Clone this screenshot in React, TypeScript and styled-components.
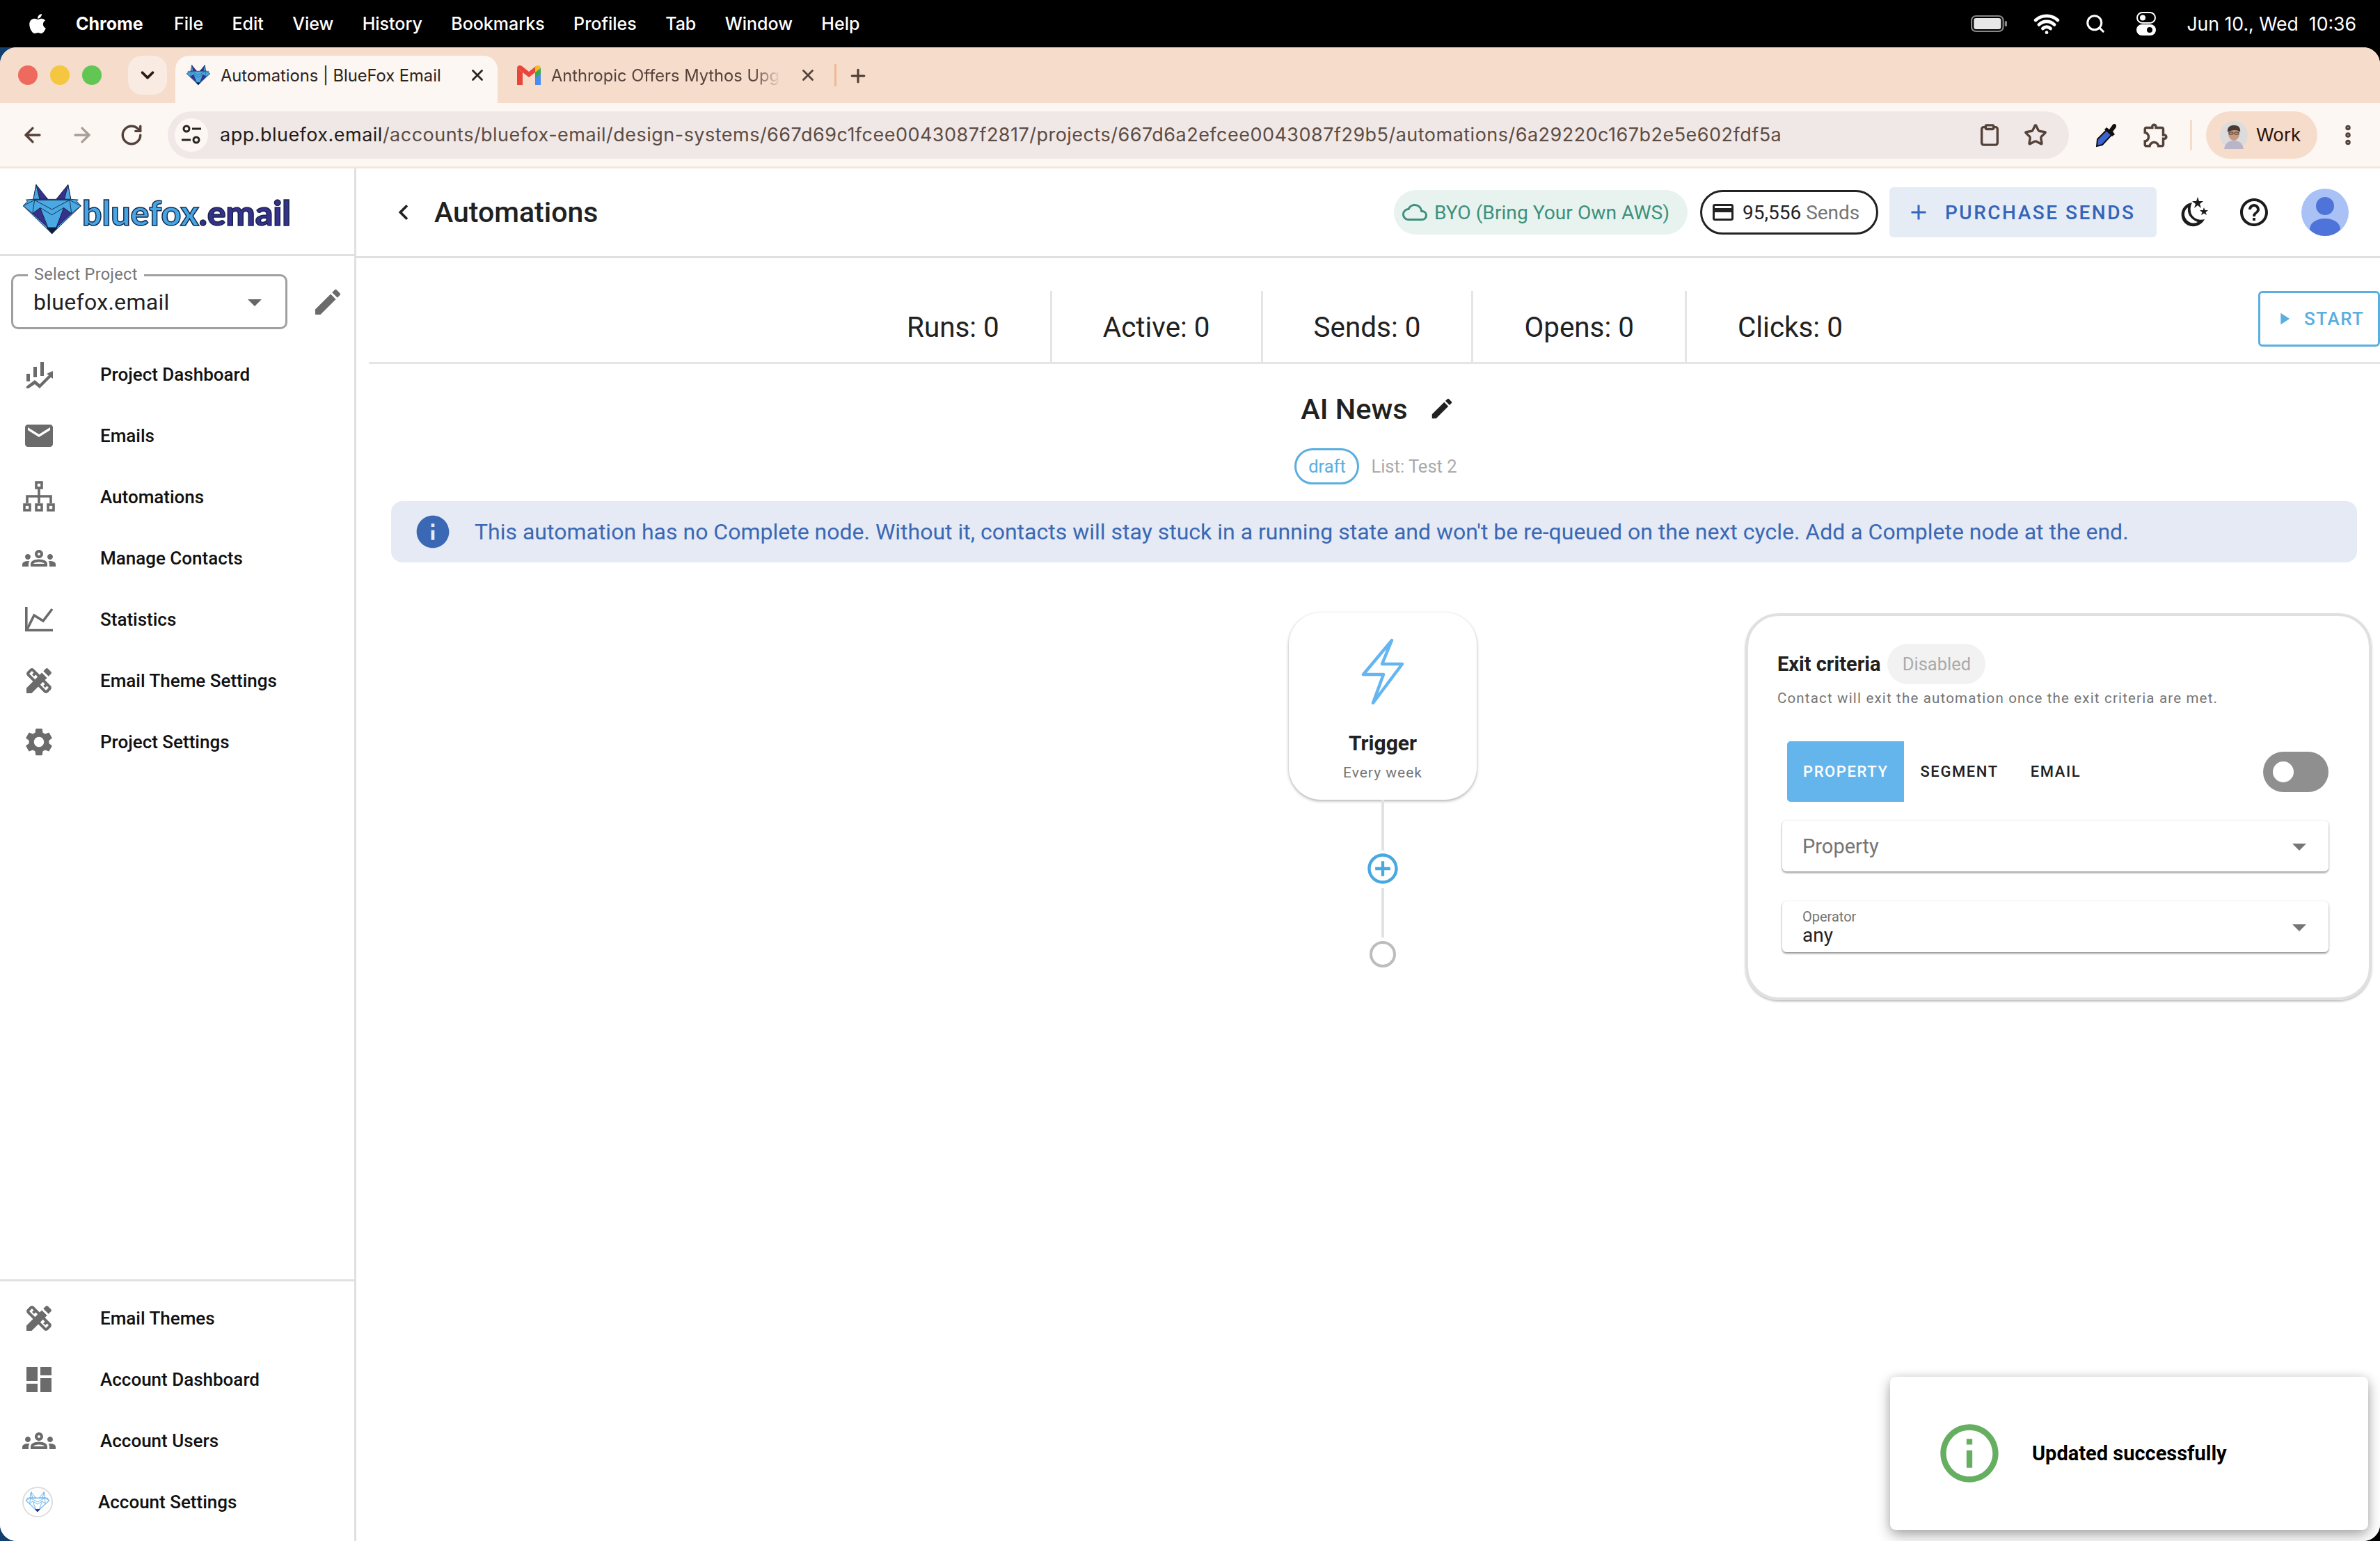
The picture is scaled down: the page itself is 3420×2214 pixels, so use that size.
import React, {FunctionComponent} from 'react';
import styled, {createGlobalStyle} from 'styled-components';
import {FaApple} from 'react-icons/fa';
import {
    MdAdd, MdAddCircleOutline, MdArrowDropDown, MdChevronLeft, MdCreditCard, MdDashboard, MdDesignServices,
    MdEdit, MdEmail, MdHelpOutline, MdInfo, MdInfoOutline, MdOutlineCloud, MdOutlineExtension, MdOutlineGroups,
    MdPlayArrow, MdSettings,
} from 'react-icons/md';
import {ArrowLeft, ArrowRight, ChevronDown, Clipboard, MoreVertical, Plus, RotateCw, Search, Star, Wifi, X} from 'lucide-react';

const GlobalStyle = createGlobalStyle`
    html, body {
        margin: 0;
        padding: 0;
        background: #000;
    }
    * {
        box-sizing: border-box;
    }
`;

const Screen = styled.div`
    position: relative;
    width: 3420px;
    height: 2214px;
    overflow: hidden;
    display: flex;
    flex-direction: column;
    font-family: Roboto, "Liberation Sans", sans-serif;
    background: linear-gradient(90deg, #12406e 0%, #000 40%);
`;

const MenuBar = styled.div`
    height: 68px;
    flex: none;
    background: #000;
    color: #fff;
    display: flex;
    align-items: center;
    font-family: Inter, "Liberation Sans", sans-serif;
    font-size: 25px;
    padding-left: 38px;
    padding-right: 34px;
`;

const MenuItems = styled.div`
    display: flex;
    align-items: center;
    gap: 41.4px;
    margin-left: 39px;
`;

const MenuItem = styled.span<{$strong?: boolean}>`
    font-weight: ${props => props.$strong ? 700 : 500};
    margin-right: ${props => props.$strong ? 3 : 0}px;
`;

const StatusItems = styled.div`
    margin-left: auto;
    display: flex;
    align-items: center;
`;

const StatusIcon = styled.span<{$gap: number}>`
    display: flex;
    margin-right: ${props => props.$gap}px;
`;

const Clock = styled.span`
    font-size: 26.6px;
    font-weight: 400;
    white-space: pre;
`;

const BrowserWindow = styled.div`
    flex: 1;
    min-height: 0;
    display: flex;
    flex-direction: column;
    border-radius: 24px;
    overflow: hidden;
    background: #fff;
`;

const TabStrip = styled.div`
    height: 80px;
    flex: none;
    background: #f6dccb;
    display: flex;
    align-items: flex-end;
    padding-left: 26px;
`;

const Traffic = styled.div`
    display: flex;
    gap: 18px;
    align-self: center;
`;

const Light = styled.span<{$color: string}>`
    width: 28px;
    height: 28px;
    border-radius: 50%;
    background: ${props => props.$color};
`;

const TabMenu = styled.div`
    width: 56px;
    height: 56px;
    margin-left: 38px;
    margin-bottom: 12px;
    border-radius: 20px;
    background: #faebe2;
    color: #2c1a10;
    display: flex;
    align-items: center;
    justify-content: center;
`;

const Tab = styled.div<{$active?: boolean}>`
    position: relative;
    height: 68px;
    width: 463px;
    margin-left: 12px;
    padding: 0 16px 12px 16px;
    display: flex;
    align-items: center;
    color: ${props => props.$active ? '#2a2320' : '#54423a'};
    background: ${props => props.$active ? '#fdf7f3' : 'transparent'};
    border-radius: 20px 20px 0 0;
    font-family: Inter, "Liberation Sans", sans-serif;
    font-size: 23.7px;
`;

const TabLabel = styled.span<{$fade?: boolean}>`
    margin-left: 15px;
    width: 330px;
    white-space: nowrap;
    overflow: hidden;
    ${props => props.$fade ? 'mask-image: linear-gradient(90deg, #000 88%, transparent 100%);' : ''}
`;

const TabClose = styled.span`
    margin-left: auto;
    display: flex;
`;

const TabDivider = styled.span`
    width: 3px;
    height: 32px;
    background: #f0b896;
    margin: 0 0 24px 9px;
`;

const NewTab = styled.span`
    color: #54423a;
    display: flex;
    margin: 0 0 24px 16px;
`;

const Toolbar = styled.div`
    height: 94px;
    flex: none;
    background: #fdf7f3;
    border-bottom: 3px solid #f5e6dd;
    display: flex;
    align-items: center;
    padding: 0;
    color: #54423a;
`;

const NavButton = styled.span<{$dim?: boolean; $left: number}>`
    display: flex;
    margin-left: ${props => props.$left}px;
    color: ${props => props.$dim ? '#a99d97' : '#54423a'};
`;

const Omnibox = styled.div`
    width: 2732px;
    height: 68px;
    margin-left: 35px;
    border-radius: 34px;
    background: #f0e8e6;
    display: flex;
    align-items: center;
    padding: 0 31px 0 10px;
`;

const SiteInfo = styled.span`
    width: 48px;
    height: 48px;
    border-radius: 50%;
    background: #fdf7f3;
    display: flex;
    align-items: center;
    justify-content: center;
    flex: none;
`;

const Url = styled.span`
    font-family: Inter, "Liberation Sans", sans-serif;
    font-size: 27px;
    letter-spacing: 0.48px;
    margin-left: 17px;
    color: #5c4c44;
    white-space: nowrap;
    b {
        font-weight: 400;
        color: #241c18;
    }
`;

const UrlActions = styled.div`
    margin-left: auto;
    display: flex;
    gap: 32px;
    align-items: center;
`;

const ToolIcon = styled.span<{$left: number}>`
    display: flex;
    margin-left: ${props => props.$left}px;
`;

const ToolDivider = styled.span`
    width: 3px;
    height: 44px;
    background: #f6dccb;
    margin-left: 28px;
`;

const ProfileChip = styled.div`
    width: 160px;
    height: 68px;
    margin-left: 20px;
    border-radius: 34px;
    background: #f6dccb;
    color: #2c1208;
    display: flex;
    align-items: center;
    gap: 12px;
    padding-left: 20px;
    font-family: Inter, "Liberation Sans", sans-serif;
    font-size: 26px;
`;

const Body = styled.div`
    flex: 1;
    min-height: 0;
    display: flex;
    background: #fff;
`;

const Sidebar = styled.aside`
    width: 512px;
    flex: none;
    border-right: 3px solid #e0e0e0;
    display: flex;
    flex-direction: column;
`;

const LogoRow = styled.div`
    height: 126px;
    flex: none;
    border-bottom: 3px solid #e0e0e0;
    display: flex;
    align-items: center;
    padding-left: 33px;
    padding-bottom: 6px;
`;

const Wordmark = styled.span`
    font-family: Lato, "Open Sans", sans-serif;
    font-weight: 900;
    font-size: 50px;
    margin-left: 1px;
    margin-top: 8px;
    color: #46a6e2;
    -webkit-text-stroke: 1.5px #16244a;
    b {
        font-weight: 900;
        color: #37308c;
    }
`;

const ProjectRow = styled.div`
    display: flex;
    align-items: center;
    padding: 26px 0 0 16px;
`;

const SelectBox = styled.div`
    position: relative;
    width: 397px;
    height: 79px;
    border: 3px solid #a0a0a0;
    border-radius: 10px;
    display: flex;
    align-items: center;
    padding: 0 0 0 29px;
    font-size: 32px;
    letter-spacing: 0.3px;
    color: #222;
`;

const SelectLabel = styled.span`
    position: absolute;
    left: 21px;
    top: -17px;
    padding: 0 9px;
    background: #fff;
    font-size: 23.5px;
    line-height: 28px;
    color: #757575;
`;

const SelectArrow = styled.span`
    margin-left: auto;
    margin-right: 20px;
    display: flex;
    color: #666;
`;

const EditProject = styled.span`
    margin-left: 34px;
    display: flex;
    color: #6b6b6b;
`;

const NavList = styled.nav<{$bottom?: boolean}>`
    display: flex;
    flex-direction: column;
    ${props => props.$bottom ? `
        margin-top: auto;
        border-top: 3px solid #e0e0e0;
        padding-top: 9px;
        padding-bottom: 12px;
    ` : `
        padding-top: 21px;
    `}
`;

const NavItem = styled.div<{$tight?: boolean}>`
    height: 88px;
    display: flex;
    align-items: center;
    padding-left: 32px;
    color: #6b6b6b;
    span {
        margin-left: ${props => props.$tight ? 65 : 64}px;
        font-size: 26px;
        font-weight: 500;
        color: #111;
    }
`;

const AccountAvatar = styled.i`
    width: 44px;
    height: 44px;
    border-radius: 50%;
    border: 2px solid #ddd;
    display: flex;
    align-items: center;
    justify-content: center;
`;

const Main = styled.main`
    flex: 1;
    min-width: 0;
    display: flex;
    flex-direction: column;
`;

const Header = styled.header`
    height: 129px;
    flex: none;
    border-bottom: 3px solid #e0e0e0;
    display: flex;
    align-items: center;
    padding-left: 46px;
    color: #212121;
`;

const PageTitle = styled.h1`
    margin: 0 0 0 22px;
    font-size: 41px;
    font-weight: 500;
    color: #212121;
`;

const HeaderActions = styled.div`
    margin-left: auto;
    display: flex;
    align-items: center;
`;

const PlanChip = styled.div`
    width: 422px;
    height: 64px;
    border-radius: 32px;
    background: #e8f3f0;
    color: #3d917b;
    display: flex;
    align-items: center;
    gap: 10px;
    padding-left: 12px;
    font-size: 28.2px;
`;

const SendsChip = styled.div`
    width: 256px;
    height: 64px;
    margin-left: 18px;
    border: 3px solid #222;
    border-radius: 32px;
    display: flex;
    align-items: center;
    gap: 10px;
    padding-left: 12px;
    font-size: 28px;
    color: #222;
    em {
        font-style: normal;
        color: #757575;
    }
`;

const PurchaseButton = styled.div`
    width: 384px;
    height: 72px;
    margin-left: 16px;
    border-radius: 6px;
    background: #e5ecf6;
    color: #3365b8;
    display: flex;
    align-items: center;
    gap: 20px;
    padding-left: 24px;
    font-size: 28px;
    font-weight: 500;
    letter-spacing: 2.5px;
`;

const HeaderIcon = styled.span<{$left: number}>`
    display: flex;
    margin-left: ${props => props.$left}px;
    color: #1c1c1c;
`;

const UserAvatar = styled.span`
    display: flex;
    margin-left: 44px;
    margin-right: 45px;
`;

const StatsRow = styled.div`
    margin: 47px 0 0 18px;
    height: 105px;
    flex: none;
    border-bottom: 3px solid #e5e5e5;
    display: flex;
    padding-left: 700px;
`;

const Stat = styled.div<{$last?: boolean}>`
    padding: 2px 73px 0;
    height: 102px;
    display: flex;
    align-items: center;
    font-size: 40.4px;
    color: #212121;
    border-right: ${props => props.$last ? '0' : '3px solid #e5e5e5'};
`;

const StartButton = styled.div`
    margin-left: auto;
    width: 175px;
    height: 80px;
    border: 3px solid #5aaee0;
    border-radius: 6px;
    color: #5aaee0;
    display: flex;
    align-items: center;
    gap: 15px;
    padding-left: 20px;
    font-size: 26px;
    font-weight: 500;
    letter-spacing: 1.5px;
`;

const TitleRow = styled.div`
    margin-top: 41px;
    display: flex;
    justify-content: center;
    align-items: center;
    gap: 30px;
    padding-left: 28px;
    height: 46px;
    font-size: 41.5px;
    font-weight: 500;
    color: #212121;
`;

const MetaRow = styled.div`
    margin-top: 34px;
    display: flex;
    justify-content: center;
    align-items: center;
    gap: 17px;
    padding-left: 22px;
    font-size: 25.5px;
    color: #aaa;
`;

const DraftChip = styled.span`
    width: 93px;
    height: 52px;
    border: 3px solid #5aaee0;
    border-radius: 26px;
    color: #5aaee0;
    display: flex;
    align-items: center;
    justify-content: center;
`;

const Alert = styled.div`
    margin: 24px 33px 0 50px;
    height: 88px;
    flex: none;
    border-radius: 16px;
    background: #e5eaf5;
    color: #3a68b4;
    display: flex;
    align-items: center;
    gap: 32px;
    padding-left: 32px;
    font-size: 32px;
`;

const Canvas = styled.div`
    margin-top: 72px;
    display: flex;
    align-items: flex-start;
    padding-left: 1340px;
`;

const NodeColumn = styled.div`
    width: 270px;
    display: flex;
    flex-direction: column;
    align-items: center;
`;

const TriggerCard = styled.div`
    width: 270px;
    height: 269px;
    border-radius: 46px;
    background: #fff;
    box-shadow: 0 2px 4px rgba(0, 0, 0, 0.3), 0 0 3px rgba(0, 0, 0, 0.06);
    display: flex;
    flex-direction: column;
    align-items: center;
    padding-top: 37px;
    strong {
        margin-top: 37px;
        font-size: 30px;
        font-weight: 700;
        color: #212121;
    }
    small {
        margin-top: 13px;
        font-size: 21px;
        letter-spacing: 1px;
        color: #757575;
    }
`;

const Connector = styled.span<{$height: number; $gap?: number}>`
    width: 4px;
    height: ${props => props.$height}px;
    margin-top: ${props => props.$gap || 0}px;
    background: #e2e2e2;
`;

const AddButton = styled.span`
    display: flex;
    color: #4aa8e0;
`;

const EndDot = styled.span`
    width: 38px;
    height: 38px;
    border: 4px solid #bdbdbd;
    border-radius: 50%;
    margin-top: 5px;
`;

const ExitPanel = styled.section`
    margin: 1px 0 0 386px;
    width: 900px;
    height: 556px;
    border: 4px solid #e0e0e0;
    border-radius: 48px;
    box-shadow: 0 2px 3px rgba(0, 0, 0, 0.25);
    padding: 40px 58px 0 42px;
`;

const ExitHeading = styled.div`
    display: flex;
    align-items: center;
    gap: 10px;
    font-size: 29px;
    font-weight: 700;
    color: #212121;
`;

const DisabledChip = styled.span`
    width: 141px;
    height: 58px;
    border-radius: 29px;
    background: #f2f2f2;
    color: #aaa;
    font-size: 25.5px;
    font-weight: 400;
    display: flex;
    align-items: center;
    justify-content: center;
`;

const ExitHint = styled.p`
    margin: 8px 0 0;
    font-size: 20.5px;
    letter-spacing: 1.17px;
    color: #757575;
`;

const TabsRow = styled.div`
    margin: 50px 0 0 14px;
    display: flex;
    align-items: center;
`;

const CriteriaTab = styled.span<{$active?: boolean}>`
    height: 87px;
    padding: 0 23px;
    display: flex;
    align-items: center;
    font-size: 22px;
    font-weight: 500;
    letter-spacing: 1.6px;
    color: ${props => props.$active ? '#fff' : '#212121'};
    background: ${props => props.$active ? '#64b5ec' : 'transparent'};
    border-radius: ${props => props.$active ? '5px 0 0 5px' : '0'};
`;

const Toggle = styled.span`
    margin-left: auto;
    width: 94px;
    height: 58px;
    border-radius: 29px;
    background: #8f8f8f;
    display: flex;
    align-items: center;
    padding-left: 14px;
    &::before {
        content: '';
        width: 30px;
        height: 30px;
        border-radius: 50%;
        background: #fff;
    }
`;

const FieldSelect = styled.div<{$gap: number}>`
    margin: ${props => props.$gap}px 0 0 7px;
    height: 73px;
    border-radius: 6px;
    background: #fff;
    box-shadow: 0 2px 3px rgba(0, 0, 0, 0.4), 0 0 3px rgba(0, 0, 0, 0.1);
    display: flex;
    align-items: center;
    padding: 0 18px 0 29px;
    font-size: 29px;
    color: #757575;
`;

const FieldStack = styled.div`
    display: flex;
    flex-direction: column;
    color: #222;
    font-size: 28px;
    line-height: 30px;
    small {
        font-size: 20px;
        line-height: 24px;
        color: #757575;
    }
`;

const FieldArrow = styled.span`
    margin-left: auto;
    display: flex;
    color: #757575;
`;

const Toast = styled.div`
    position: absolute;
    right: 17px;
    bottom: 16px;
    width: 687px;
    height: 220px;
    border-radius: 8px;
    background: #fff;
    box-shadow: 0 8px 20px rgba(0, 0, 0, 0.32), 0 0 12px rgba(0, 0, 0, 0.1);
    display: flex;
    align-items: center;
    padding-left: 64px;
    gap: 40px;
    color: #66ae60;
    span {
        font-size: 29px;
        font-weight: 700;
        color: #000;
    }
`;

type FoxProps = {
    size: number;
    line?: string;
    fill?: string;
    dark?: string;
    chin?: string;
    weight?: number;
};

// fox mark traced from the logo, used by the sidebar, the tab and the account avatar
const FoxMark: FunctionComponent<FoxProps> = ({size, line = '#0f1c3c', fill = '#4aa8e2', dark = '#37308c', chin = '#0f1c3c', weight = 2.5}) => (
    <svg width={size} height={size * 216 / 248} viewBox="99 86 248 216" stroke={line} strokeWidth={weight} strokeLinejoin="round">
        <polygon points="155,90 205,152 143,152" fill={dark}/>
        <polygon points="155,90 143,152 170,152" fill={fill}/>
        <polygon points="290,90 240,152 302,152" fill={dark}/>
        <polygon points="290,90 302,152 275,152" fill={fill}/>
        <polygon points="100,180 118,160 112,154 145,152 300,152 333,154 327,160 345,180 222,298" fill={fill}/>
        <polygon points="140,212 172,188 205,272" fill={dark}/>
        <polygon points="305,212 272,188 240,272" fill={dark}/>
        <polygon points="148,155 222,195 297,155" fill="none"/>
        <polygon points="148,155 140,212 100,180" fill="none"/>
        <polygon points="297,155 305,212 345,180" fill="none"/>
        <polyline points="172,188 222,218 272,188" fill="none"/>
        <polygon points="200,272 245,272 222,298" fill={chin} stroke={chin}/>
    </svg>
);

const GmailMark = () => (
    <svg width="34" height="28" viewBox="0 0 34 28">
        <path d="M0 4 L0 28 L8 28 L8 10 Z" fill="#e8453c"/>
        <path d="M26 10 L26 28 L34 28 L34 4 Z" fill="#4a8af4"/>
        <path d="M0 4 C0 0 4 -1 7 1 L17 9 L27 1 L26 10 L17 17 L8 10 Z" fill="#e8453c"/>
        <path d="M26 2 L27 1 C30 -1 34 0 34 4 L26 10 Z" fill="#f6bb1e"/>
        <path d="M26 10 L34 4 L34 12 L26 18 Z" fill="#38a853"/>
    </svg>
);

const FaceAvatar = () => (
    <svg width="40" height="40" viewBox="0 0 40 40">
        <circle cx="20" cy="20" r="20" fill="#dcdcdc"/>
        <path d="M6 40 C8 30 14 28 20 28 C26 28 32 30 34 40 Z" fill="#b9b4c8"/>
        <ellipse cx="20" cy="18" rx="8" ry="10" fill="#c79b82"/>
        <path d="M11 16 C10 7 16 6 21 6 C27 6 30 10 29 16 C26 12 18 12 11 16 Z" fill="#4d3a30"/>
        <rect x="13" y="16" width="6" height="3" rx="1" fill="none" stroke="#3a2c24"/>
        <rect x="21" y="16" width="6" height="3" rx="1" fill="none" stroke="#3a2c24"/>
    </svg>
);

const DashboardGlyph = () => (
    <svg width="48" height="48" viewBox="0 0 48 48" fill="currentColor">
        <rect x="6" y="23" width="5" height="11"/>
        <rect x="16" y="13" width="5" height="15"/>
        <rect x="26" y="6" width="5" height="20"/>
        <path d="M6 41 L18 32 L25 38 L38 25 L35 23 L44 19 L44 30 L41 28 L25 44 L18 38 L9 44 L6 44 Z"/>
    </svg>
);

const ChartGlyph = () => (
    <svg width="48" height="48" viewBox="0 0 48 48" fill="none" stroke="currentColor" strokeWidth="3.6">
        <path d="M5.8 6 V39.5 H44"/>
        <path d="M7 38 L17 18 L30 26 L43 9"/>
    </svg>
);

const TreeGlyph = () => (
    <svg width="48" height="48" viewBox="0 0 48 48" fill="none" stroke="currentColor" strokeWidth="3.6">
        <rect x="20" y="3" width="8" height="8"/>
        <path d="M24 11 V33 M7 33 V23 H41 V33"/>
        <rect x="3" y="35" width="8" height="8"/>
        <rect x="20" y="35" width="8" height="8"/>
        <rect x="37" y="35" width="8" height="8"/>
    </svg>
);

const MoonGlyph = () => (
    <svg width="44" height="48" viewBox="0 0 44 48" fill="#1c1c1c">
        <path d="M19 10 C7 12 2 22 4 31 C6 41 17 47 27 43 C32 41 35 38 37 34 C27 37 18 31 17 23 C16 18 17 14 19 10 Z M13 17 C12 25 15 33 27 38 C20 42 11 38 8.5 30 C7 25 9 20 13 17 Z" fillRule="evenodd"/>
        <path d="M27 2 L29 8 L35 8 L30 12 L32 18 L27 14 L22 18 L24 12 L19 8 L25 8 Z"/>
        <path d="M36 17 L37.5 21 L42 21 L38.5 24 L40 28 L36 25.5 L32 28 L33.5 24 L30 21 L34.5 21 Z"/>
    </svg>
);

const BoltGlyph = () => (
    <svg width="62" height="96" viewBox="0 0 62 96" fill="none" stroke="#64b5f0" strokeWidth="4.5" strokeLinejoin="round">
        <path d="M44 3 L3 52 L32 52 L17 93 L59 37 L30 37 Z"/>
    </svg>
);

const PersonAvatar = () => (
    <svg width="68" height="68" viewBox="0 0 68 68">
        <circle cx="34" cy="34" r="34" fill="#a9c1f5"/>
        <circle cx="34" cy="25" r="13" fill="#4f74d9"/>
        <path d="M12 59 C12 49 22 43 34 43 C46 43 56 49 56 59 C50 65 42 68 34 68 C26 68 18 65 12 59 Z" fill="#4f74d9"/>
    </svg>
);

const App = () => {
    const topNav: [string, React.ReactNode][] = [
        ['Project Dashboard', <DashboardGlyph/>],
        ['Emails', <MdEmail size={48}/>],
        ['Automations', <TreeGlyph/>],
        ['Manage Contacts', <MdOutlineGroups size={48}/>],
        ['Statistics', <ChartGlyph/>],
        ['Email Theme Settings', <MdDesignServices size={48}/>],
        ['Project Settings', <MdSettings size={48}/>],
    ];
    const bottomNav: [string, React.ReactNode][] = [
        ['Email Themes', <MdDesignServices size={48}/>],
        ['Account Dashboard', <MdDashboard size={48}/>],
        ['Account Users', <MdOutlineGroups size={48}/>],
    ];

    return (
        <Screen>
            <GlobalStyle/>
            <MenuBar>
                <FaApple size={32}/>
                <MenuItems>
                    <MenuItem $strong>Chrome</MenuItem>
                    {['File', 'Edit', 'View', 'History', 'Bookmarks', 'Profiles', 'Tab', 'Window', 'Help'].map(item => (
                        <MenuItem key={item}>{item}</MenuItem>
                    ))}
                </MenuItems>
                <StatusItems>
                    <StatusIcon $gap={38}>
                        <svg width="52" height="26" viewBox="0 0 48 26" preserveAspectRatio="none">
                            <rect x="1" y="2" width="42" height="22" rx="6" fill="none" stroke="#888" strokeWidth="2"/>
                            <rect x="4" y="5" width="36" height="16" rx="3" fill="#e8e8e8"/>
                            <rect x="45" y="9" width="3" height="8" rx="1.5" fill="#888"/>
                        </svg>
                    </StatusIcon>
                    <StatusIcon $gap={36}><Wifi size={38} strokeWidth={3}/></StatusIcon>
                    <StatusIcon $gap={44}><Search size={30} strokeWidth={2.4}/></StatusIcon>
                    <StatusIcon $gap={44}>
                        <svg width="28" height="34" viewBox="0 0 28 34">
                            <rect x="1" y="1" width="26" height="15" rx="7.5" fill="none" stroke="#fff" strokeWidth="2"/>
                            <circle cx="9" cy="8.5" r="4" fill="#fff"/>
                            <rect y="18" width="28" height="16" rx="8" fill="#fff"/>
                            <circle cx="19" cy="26" r="4" fill="#000"/>
                        </svg>
                    </StatusIcon>
                    <Clock>Jun 10., Wed  10:36</Clock>
                </StatusItems>
            </MenuBar>
            <BrowserWindow>
                <TabStrip>
                    <Traffic>
                        <Light $color="#ee6a5f"/>
                        <Light $color="#f5c63f"/>
                        <Light $color="#62c654"/>
                    </Traffic>
                    <TabMenu><ChevronDown size={30} strokeWidth={3}/></TabMenu>
                    <Tab $active>
                        <FoxMark size={34}/>
                        <TabLabel>Automations | BlueFox Email</TabLabel>
                        <TabClose><X size={26} strokeWidth={2.6}/></TabClose>
                    </Tab>
                    <Tab>
                        <GmailMark/>
                        <TabLabel $fade>Anthropic Offers Mythos Upgrade</TabLabel>
                        <TabClose><X size={26} strokeWidth={2.6}/></TabClose>
                    </Tab>
                    <TabDivider/>
                    <NewTab><Plus size={30} strokeWidth={2.6}/></NewTab>
                </TabStrip>
                <Toolbar>
                    <NavButton $left={30}><ArrowLeft size={34} strokeWidth={2.4}/></NavButton>
                    <NavButton $left={37} $dim><ArrowRight size={34} strokeWidth={2.4}/></NavButton>
                    <NavButton $left={37}><RotateCw size={34} strokeWidth={2.4}/></NavButton>
                    <Omnibox>
                        <SiteInfo>
                            <svg width="28" height="34" viewBox="0 0 28 34" fill="none" stroke="#2a2320" strokeWidth="3">
                                <circle cx="7" cy="8" r="4"/>
                                <path d="M15 8 H28 M0 24 H13"/>
                                <circle cx="21" cy="24" r="4"/>
                            </svg>
                        </SiteInfo>
                        <Url><b>app.bluefox.email</b>/accounts/bluefox-email/design-systems/667d69c1fcee0043087f2817/projects/667d6a2efcee0043087f29b5/automations/6a29220c167b2e5e602fdf5a</Url>
                        <UrlActions>
                            <Clipboard size={34} strokeWidth={2.4}/>
                            <Star size={34} strokeWidth={2.4}/>
                        </UrlActions>
                    </Omnibox>
                    <ToolIcon $left={38}>
                        <svg width="32" height="36" viewBox="0 0 32 36">
                            <path d="M2 34 L3 24 L17 10 L24 17 L10 32 Z" fill="#3d63d0" stroke="#111" strokeWidth="2"/>
                            <path d="M16 7 L20 10 L25 3 C28 0 32 4 29 8 L25 13 L28 17 L24 20 L13 10 Z" fill="#111"/>
                        </svg>
                    </ToolIcon>
                    <ToolIcon $left={34}><MdOutlineExtension size={42}/></ToolIcon>
                    <ToolDivider/>
                    <ProfileChip><FaceAvatar/>Work</ProfileChip>
                    <ToolIcon $left={26}><MoreVertical size={36} strokeWidth={3}/></ToolIcon>
                </Toolbar>
                <Body>
                    <Sidebar>
                        <LogoRow>
                            <FoxMark size={84}/>
                            <Wordmark>bluefox<b>.email</b></Wordmark>
                        </LogoRow>
                        <ProjectRow>
                            <SelectBox>
                                <SelectLabel>Select Project</SelectLabel>
                                bluefox.email
                                <SelectArrow><MdArrowDropDown size={48}/></SelectArrow>
                            </SelectBox>
                            <EditProject><MdEdit size={48}/></EditProject>
                        </ProjectRow>
                        <NavList>
                            {topNav.map(([label, icon]) => (
                                <NavItem key={label}>{icon}<span>{label}</span></NavItem>
                            ))}
                        </NavList>
                        <NavList $bottom>
                            {bottomNav.map(([label, icon]) => (
                                <NavItem key={label}>{icon}<span>{label}</span></NavItem>
                            ))}
                            <NavItem $tight>
                                <AccountAvatar><FoxMark size={34} line="#6cb4e8" fill="#fff" dark="#fff" chin="#37308c" weight={7}/></AccountAvatar>
                                <span>Account Settings</span>
                            </NavItem>
                        </NavList>
                    </Sidebar>
                    <Main>
                        <Header>
                            <MdChevronLeft size={44}/>
                            <PageTitle>Automations</PageTitle>
                            <HeaderActions>
                                <PlanChip><MdOutlineCloud size={36}/>BYO (Bring Your Own AWS)</PlanChip>
                                <SendsChip><MdCreditCard size={36}/><span>95,556 <em>Sends</em></span></SendsChip>
                                <PurchaseButton><MdAdd size={36}/>PURCHASE SENDS</PurchaseButton>
                                <HeaderIcon $left={32}><MoonGlyph/></HeaderIcon>
                                <HeaderIcon $left={40}><MdHelpOutline size={48}/></HeaderIcon>
                                <UserAvatar><PersonAvatar/></UserAvatar>
                            </HeaderActions>
                        </Header>
                        <StatsRow>
                            <Stat>Runs: 0</Stat>
                            <Stat>Active: 0</Stat>
                            <Stat>Sends: 0</Stat>
                            <Stat>Opens: 0</Stat>
                            <Stat $last>Clicks: 0</Stat>
                            <StartButton><MdPlayArrow size={28}/>START</StartButton>
                        </StatsRow>
                        <TitleRow>
                            AI News
                            <MdEdit size={38}/>
                        </TitleRow>
                        <MetaRow>
                            <DraftChip>draft</DraftChip>
                            List: Test 2
                        </MetaRow>
                        <Alert>
                            <MdInfo size={56}/>
                            This automation has no Complete node. Without it, contacts will stay stuck in a running state and won't be re-queued on the next cycle. Add a Complete node at the end.
                        </Alert>
                        <Canvas>
                            <NodeColumn>
                                <TriggerCard>
                                    <BoltGlyph/>
                                    <strong>Trigger</strong>
                                    <small>Every week</small>
                                </TriggerCard>
                                <Connector $height={73}/>
                                <AddButton><MdAddCircleOutline size={52}/></AddButton>
                                <Connector $height={71} $gap={2}/>
                                <EndDot/>
                            </NodeColumn>
                            <ExitPanel>
                                <ExitHeading>
                                    Exit criteria
                                    <DisabledChip>Disabled</DisabledChip>
                                </ExitHeading>
                                <ExitHint>Contact will exit the automation once the exit criteria are met.</ExitHint>
                                <TabsRow>
                                    <CriteriaTab $active>PROPERTY</CriteriaTab>
                                    <CriteriaTab>SEGMENT</CriteriaTab>
                                    <CriteriaTab>EMAIL</CriteriaTab>
                                    <Toggle/>
                                </TabsRow>
                                <FieldSelect $gap={27}>
                                    Property
                                    <FieldArrow><MdArrowDropDown size={48}/></FieldArrow>
                                </FieldSelect>
                                <FieldSelect $gap={43}>
                                    <FieldStack>
                                        <small>Operator</small>
                                        any
                                    </FieldStack>
                                    <FieldArrow><MdArrowDropDown size={48}/></FieldArrow>
                                </FieldSelect>
                            </ExitPanel>
                        </Canvas>
                    </Main>
                </Body>
            </BrowserWindow>
            <Toast>
                <MdInfoOutline size={100}/>
                <span>Updated successfully</span>
            </Toast>
        </Screen>
    );
};

export default App;
